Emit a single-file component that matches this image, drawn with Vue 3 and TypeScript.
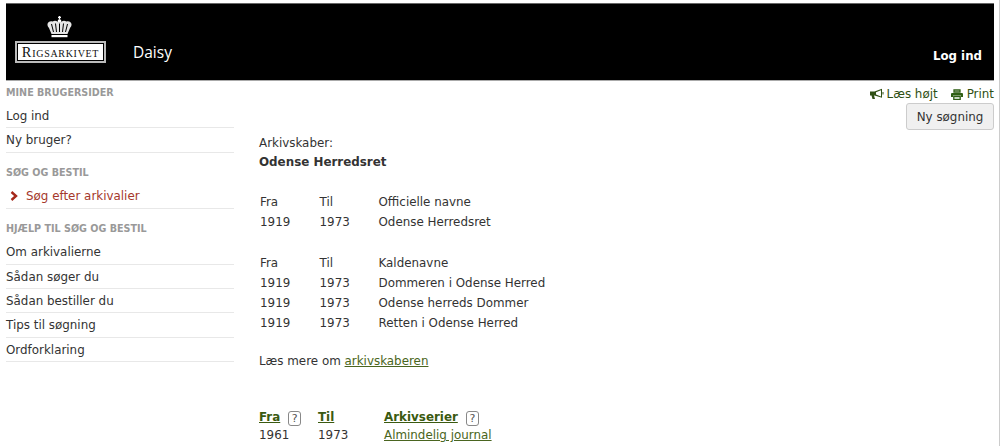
<script setup lang="ts">
interface Row { from: string; to: string; name: string }
const groups: { label: string; head: string; rows: Row[] }[] = [
  { label: 'a', head: 'Officielle navne', rows: [{ from: '1919', to: '1973', name: 'Odense Herredsret' }] },
  {
    label: 'b',
    head: 'Kaldenavne',
    rows: [
      { from: '1919', to: '1973', name: 'Dommeren i Odense Herred' },
      { from: '1919', to: '1973', name: 'Odense herreds Dommer' },
      { from: '1919', to: '1973', name: 'Retten i Odense Herred' },
    ],
  },
]
const help = ['Om arkivalierne', 'Sådan søger du', 'Sådan bestiller du', 'Tips til søgning', 'Ordforklaring']
</script>

<template>
  <div class="page">
    <header class="top">
      <div class="logo">
        <svg class="crown" viewBox="0 0 26 22" width="27" height="22">
          <path d="M13 0v3.500M11.500 1.400h3" stroke="#fff" stroke-width="1.300" fill="none" />
          <circle cx="13" cy="5" r="1.800" fill="#fff" />
          <path d="M5 18 L2.500 12 C-1 8 2 4.500 6 5.500 C9 3.500 11 5.500 13 6.500 C15 5.500 17 3.500 20 5.500 C24 4.500 27 8 23.500 12 L21 18 Z" fill="#e6e6e6" />
          <path d="M9 7.500 L10 16 M13 7.500 V16 M17 7.500 L16 16 M5 8 L7 16 M21 8 L19 16" stroke="#000" stroke-width="1" fill="none" />
          <rect x="5" y="19" width="16" height="2.200" fill="#fff" />
        </svg>
        <div class="mark"><span class="mark-in">Rigsarkivet</span></div>
      </div>
      <div class="daisy">Daisy</div>
      <a class="login">Log ind</a>
    </header>
    <div class="body">
      <aside class="side">
        <h4 class="first">Mine brugersider</h4>
        <a class="item">Log ind</a>
        <a class="item">Ny bruger?</a>
        <h4>Søg og bestil</h4>
        <a class="item active">
          <svg class="chev" viewBox="0 0 8 10" width="8" height="10"><path d="M1.500 1 L6 5 L1.500 9" stroke="#a5281b" stroke-width="2.400" fill="none" /></svg>
          Søg efter arkivalier
        </a>
        <h4>Hjælp til søg og bestil</h4>
        <a v-for="h in help" :key="h" class="item">{{ h }}</a>
      </aside>
      <main class="main">
        <div class="tools">
          <div class="links">
            <span class="tool">
              <svg viewBox="0 0 14 12" width="14" height="12"><path d="M0 3.500h4.500L12 .8v9L4.500 7.500H4l1 3.500H2.500L1.500 7.500H0z" fill="#2f4f14" /><path d="M11 2.200 L6 4.200v2.300l5 2z" fill="#fff" /><path d="M13 4v2.500" stroke="#2f4f14" /></svg>
              Læs højt
            </span>
            <span class="tool print">
              <svg viewBox="0 0 12 11" width="12" height="11"><path d="M3 1h6v2H3z" fill="none" stroke="#2f5f14" stroke-width="1.300" /><path d="M1 4h10a1 1 0 0 1 1 1v3H10V6.500H2V8H0V5a1 1 0 0 1 1-1z" fill="#2f5f14" /><path d="M2.800 7.500h6.400v2.800H2.800z" fill="none" stroke="#2f5f14" stroke-width="1.300" /></svg>
              Print
            </span>
          </div>
          <button class="btn">Ny søgning</button>
        </div>
        <div class="content">
          <p class="label">Arkivskaber:</p>
          <p class="name">Odense Herredsret</p>
          <div v-for="g in groups" :key="g.label" class="table">
            <div class="row"><span>Fra</span><span>Til</span><span>{{ g.head }}</span></div>
            <div v-for="r in g.rows" :key="r.name" class="row">
              <span>{{ r.from }}</span><span>{{ r.to }}</span><span>{{ r.name }}</span>
            </div>
          </div>
          <p class="more">Læs mere om <a class="lnk">arkivskaberen</a></p>
          <div class="series head">
            <span><a class="th">Fra</a><i class="q">?</i></span>
            <span><a class="th">Til</a></span>
            <span><a class="th">Arkivserier</a><i class="q">?</i></span>
          </div>
          <div class="series">
            <span>1961</span><span>1973</span><span><a class="lnk">Almindelig journal</a></span>
          </div>
        </div>
      </main>
    </div>
  </div>
</template>

<style>
html, body { margin: 0; background: #fff; overflow: hidden; }
</style>

<style scoped>
.page { height: 446px; overflow: hidden; padding: 3px 5px 0 6px; border-right: 1px solid #ccc; box-sizing: border-box; font-family: "DejaVu Sans", Verdana, sans-serif; font-size: 11.900px; color: #333; }
.top { box-sizing: content-box; height: 76px; background: #000; display: flex; align-items: flex-end; border-bottom: 1px solid #aaa; border-top: 1px solid #666; }
.logo { width: 91px; margin-left: 9px; display: flex; flex-direction: column; align-items: center; margin-bottom: 17px; }
.crown { display: block; margin-bottom: 3px; margin-left: -2px; }
.mark { border: 2px solid #bbb; padding: 1px; width: 91px; height: 22px; box-sizing: border-box; background: #000; }
.mark-in { display: block; height: 100%; background: #fff; color: #111; font-family: "Liberation Serif", serif; font-variant: small-caps; font-size: 14.500px; letter-spacing: .7px; line-height: 16px; text-align: center; white-space: nowrap; }
.daisy { color: #fff; font-size: 15.500px; margin-left: 27px; margin-bottom: 17px; font-family: "Open Sans", sans-serif; }
.login { color: #fff; font-weight: 700; font-size: 11.800px; margin-left: auto; margin-bottom: 17px; margin-right: 12px; }
.body { display: flex; }
.side { width: 228px; flex: none; }
h4 { margin: 14.500px 0 0; font-size: 9.600px; line-height: 12px; text-transform: uppercase; color: #999; font-weight: 700; }
h4.first { margin-top: 6px; }
.item { display: block; height: 23.400px; line-height: 24px; border-bottom: 1px solid #e8e8e8; color: #333; }
h4 + .item { margin-top: 5px; }
.active { color: #a5382b; display: flex; align-items: center; }
.chev { margin: 0 8px 0 4px; }
.main { flex: 1; min-width: 0; }
.tools { display: flex; flex-direction: column; align-items: flex-end; padding-top: 5px; }
.links { display: flex; gap: 13px; color: #2f4f14; line-height: 16px; }
.tool { display: inline-flex; align-items: center; gap: 3px; }
.print { gap: 4px; }
.btn { margin-top: 1px; width: 88px; height: 27px; padding: 0; border: 1px solid #ccc; border-radius: 3px; background: #f0f0f0; color: #333; font: inherit; }
.content { margin-top: -25px; padding-left: 25px; }
p { margin: 0; }
.label { line-height: 18px; margin-top: 29px; }
.name { font-weight: 700; line-height: 20px; margin-top: 0; }
.table { margin-top: 20px; }
.table + .table { margin-top: 20.500px; }
.row { display: grid; grid-template-columns: 59.500px 59px 1fr; height: 20.200px; line-height: 20px; padding-left: 1px; }
.more { margin-top: 17.500px; line-height: 20px; }
.lnk { color: #4a6520; text-decoration: underline; }
.series { display: grid; grid-template-columns: 59px 66px 1fr; line-height: 18px; }
.head { margin-top: 37px; }
.th { color: #3a5a10; font-weight: 700; text-decoration: underline; }
.q { display: inline-block; font-style: normal; width: 11px; height: 13px; line-height: 13px; margin-left: 8px; text-align: center; border: 1px solid #888; border-radius: 3px; font-size: 11px; color: #555; vertical-align: -1px; }
</style>
